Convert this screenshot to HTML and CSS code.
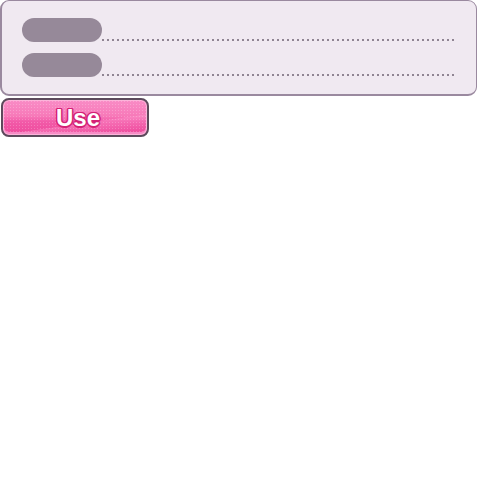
FILE: index.html
```html
<!DOCTYPE html>
<html>
<head>
<meta charset="utf-8">
<link rel="stylesheet" href="styles.css">
</head>
<body>
<div class="panel">
  <div class="row"><span class="pill"></span><span class="dots"></span></div>
  <div class="row"><span class="pill"></span><span class="dots"></span></div>
</div>
<button class="use-btn"><span class="use-label">Use</span></button>
</body>
</html>
```
FILE: styles.css
```css
html, body {
  margin: 0;
  padding: 0;
  background: #ffffff;
}
body {
  width: 478px;
  font-family: "Liberation Sans", Arial, sans-serif;
}
.panel {
  box-sizing: border-box;
  width: 477px;
  height: 96px;
  background: #f0e9f1;
  border: 1px solid #9a899f;
  border-left-width: 2px;
  border-bottom-width: 2px;
  border-radius: 9px;
  padding: 17px 19px 0 20px;
  display: flex;
  flex-direction: column;
  gap: 11px;
}
.row {
  display: flex;
  align-items: flex-end;
  height: 24px;
}
.pill {
  width: 80px;
  height: 24px;
  border-radius: 12px;
  background: #968999;
  flex: none;
}
.dots {
  flex: 1;
  height: 2px;
  margin-bottom: 1px;
  background: repeating-linear-gradient(to right, #8f8492 0 2px, transparent 2px 5px);
}
.use-btn {
  display: flex;
  align-items: center;
  justify-content: center;
  box-sizing: border-box;
  margin: 2px 0 0 1px;
  width: 148px;
  height: 39px;
  padding: 0 0 0 6px;
  border: 2px solid #5c4a5c;
  border-radius: 8px;
  background:
    radial-gradient(circle, rgba(255,255,255,0.22) 0.6px, transparent 0.9px) 0 0 / 3px 3px,
    linear-gradient(172deg, rgba(255,255,255,0) 62%, rgba(255,160,210,0.35) 63%, rgba(255,160,210,0) 90%),
    linear-gradient(to bottom, #f98cc6 0%, #f77ab9 45%, #f25aa8 62%, #ee4a9c 100%);
  box-shadow: inset 0 0 0 1px #fcb4da, inset 0 -2px 0 1px #f78cc6;
  cursor: pointer;
}
.use-label {
  font-family: "Liberation Sans", Arial, sans-serif;
  font-weight: bold;
  font-size: 24px;
  line-height: 1;
  color: #ffffff;
  text-shadow:
    1.5px 0 0 #d42276, -1.5px 0 0 #d42276, 0 1.5px 0 #d42276, 0 -1.5px 0 #d42276,
    1px 1px 0 #d42276, -1px -1px 0 #d42276, 1px -1px 0 #d42276, -1px 1px 0 #d42276;
  margin-top: 1px;
}
```
